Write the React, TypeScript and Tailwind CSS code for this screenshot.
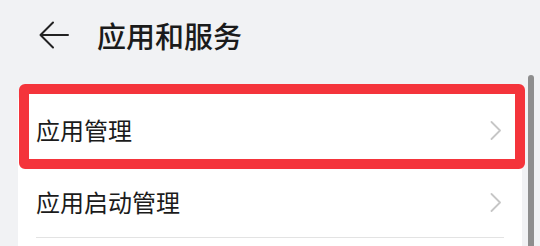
const font = { fontFamily: '"Noto Sans CJK SC", "Noto Sans", sans-serif' };

function Row({ label, height, divider }: { label: string; height: string; divider?: boolean }) {
  return (
    <div className={`mx-[18px] flex items-center justify-between ${height} ${divider ? 'border-b border-[#e3e3e3]' : ''}`}>
      <span className="text-[24px] leading-none text-[#1b1b1b]">{label}</span>
      <svg width="12" height="19" viewBox="0 0 12 19" fill="none" className="mr-[2px]">
        <path d="M1.5 1 L10 9.5 L1.5 18" stroke="#c6c6c6" strokeWidth="1.8" strokeLinecap="round" strokeLinejoin="round" />
      </svg>
    </div>
  );
}

export default function App() {
  return (
    <div className="relative w-[540px] h-[246px] overflow-hidden bg-[#f1f2f4]" style={font}>
      <div className="flex items-center gap-[28px] h-[70px] pl-[39px]">
        <svg width="30" height="28" viewBox="0 0 30 28" fill="none">
          <path d="M1.5 14 H29 M14 1.5 L1.5 14 L14 26.5" stroke="#222" strokeWidth="2" strokeLinecap="round" strokeLinejoin="round" />
        </svg>
        <h1 className="text-[29px] font-medium leading-none text-[#1b1b1b]">应用和服务</h1>
      </div>

      <div className="ml-[18px] mt-[16px] w-[504px] bg-white rounded-t-2xl pt-[7px]">
        <Row label="应用管理" height="h-[74px]" />
        <Row label="应用启动管理" height="h-[71px]" divider />
        <div className="h-[40px]" />
      </div>

      {/* red highlight drawn over the first row */}
      <div className="absolute left-[19px] top-[84px] w-[506px] h-[85px] rounded-md border-[10px] border-[#f4343b]" />

      {/* scroll indicator */}
      <div className="absolute left-[528px] top-[75px] w-[6px] h-[200px] rounded-full bg-[#8e8e8e]" />
    </div>
  );
}
